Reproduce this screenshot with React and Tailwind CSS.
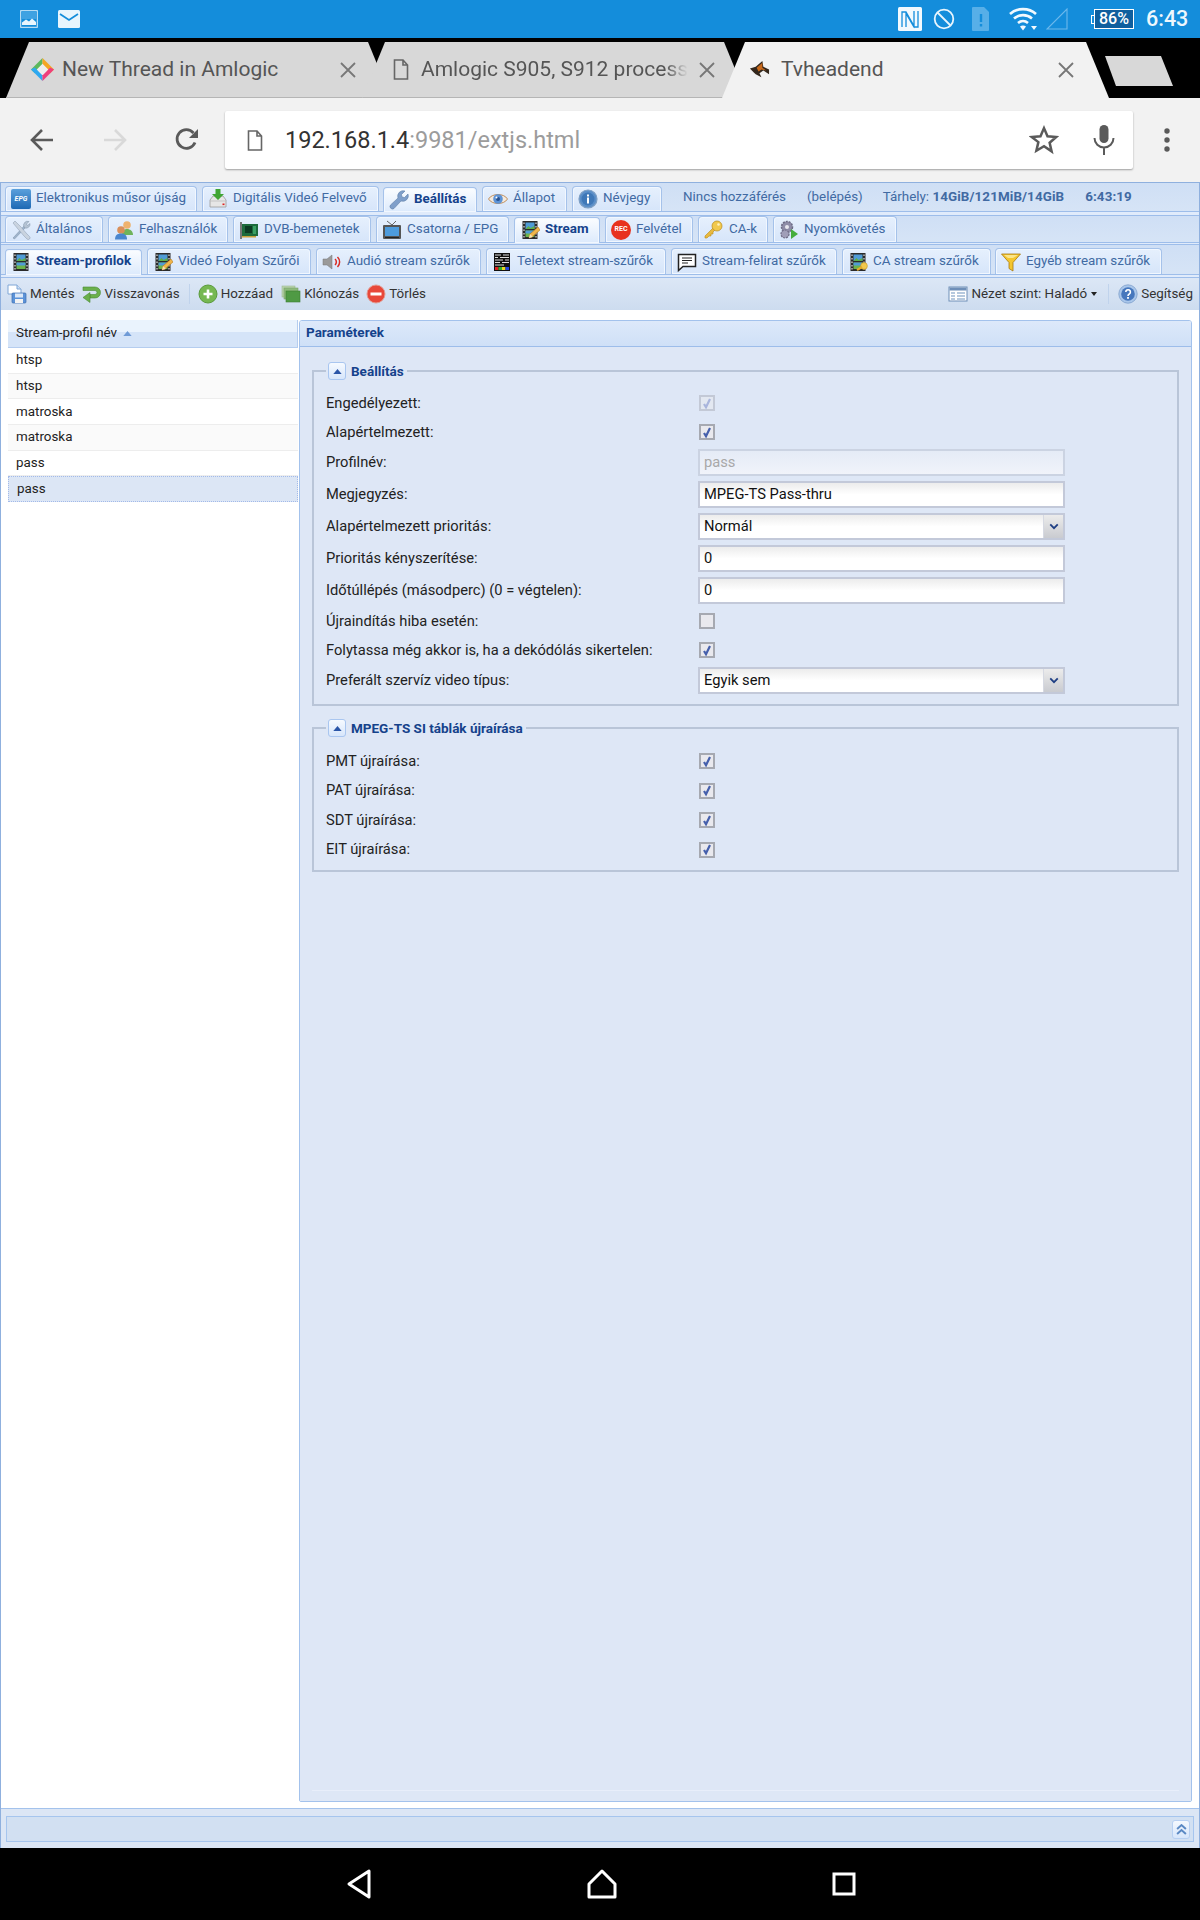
import React from "react";

const I = ({ children, className = "w-5 h-5" }) => (
  <svg viewBox="0 0 20 20" className={`${className} shrink-0`}>{children}</svg>
);

const Film = () => (
  <g>
    <rect x="2.500" y="1" width="15" height="18" fill="#2b2b2b" />
    <rect x="5.500" y="2.500" width="9" height="6.500" fill="#4f9bd6" />
    <path d="M5.500 9l3-3 2 2 4-2v3z" fill="#5fae4a" />
    <rect x="5.500" y="10.500" width="9" height="6.500" fill="#6cb44c" />
    <rect x="5.500" y="10.500" width="9" height="3" fill="#4f9bd6" />
    <path d="M4 2.500v1.500M4 6v1.500M4 9.500v1.500M4 13v1.500M4 16v1.500M16 2.500v1.500M16 6v1.500M16 9.500v1.500M16 13v1.500M16 16v1.500" stroke="#ddd" strokeWidth="1.200" />
  </g>
);
const Pencil = () => (
  <g>
    <path d="M9 18l1-4 8-7 2 3-8 7z" fill="#f0b54a" stroke="#b57a1c" strokeWidth=".6" />
    <path d="M9 18l1-4 3 3z" fill="#f6e0b0" />
  </g>
);
const IconEpg = () => (
  <span className="w-5 h-5 shrink-0 rounded-[2px] bg-gradient-to-b from-[#5aa0dc] to-[#1d69b4] flex items-center justify-center text-[7px] leading-none font-bold italic text-white">EPG</span>
);
const IconDvr = () => (
  <I>
    <path d="M2 11l3-4h10l3 4v7H2z" fill="#e6e6e6" stroke="#999" strokeWidth=".8" />
    <path d="M2 12h16" stroke="#bbb" strokeWidth=".8" />
    <rect x="14.500" y="14.500" width="2" height="1.600" fill="#d22" />
    <path d="M7.500 0h5v5h3.500l-6 6-6-6h3.500z" fill="#3fa535" />
  </I>
);
const IconWrench = () => (
  <I>
    <path d="M19 4l-3.500 3.500-2.500-.5-.5-2.500L16 1A5.500 5.500 0 0 0 9 8L1.500 15a2.500 2.500 0 0 0 3.500 3.500L12 11A5.500 5.500 0 0 0 19 4z" fill="#7f9fca" stroke="#5f7fa8" strokeWidth=".6" />
  </I>
);
const IconEye = () => (
  <I>
    <path d="M0.500 10C4 4 16 4 19.500 10 16 16 4 16 0.500 10z" fill="#f3eadf" stroke="#c08f5c" strokeWidth="1" />
    <circle cx="10" cy="10" r="4.800" fill="#5d93d6" />
    <circle cx="10" cy="10" r="2" fill="#25508f" />
    <circle cx="8.500" cy="8.500" r="1" fill="#fff" />
  </I>
);
const IconInfo = () => (
  <I>
    <circle cx="10" cy="10" r="9" fill="#5b8fc9" stroke="#7e9fc4" strokeWidth="1.200" />
    <circle cx="10" cy="10" r="6.500" fill="#3f78b8" />
    <rect x="9" y="8.500" width="2" height="6" fill="#fff" />
    <rect x="9" y="5.500" width="2" height="2" fill="#fff" />
  </I>
);
const IconTools = () => (
  <I>
    <path d="M2 18L14 5l1.500 1.500L3.500 19z" fill="#9fb4cc" stroke="#7b8ea5" strokeWidth=".5" />
    <path d="M13 7a4 4 0 0 1 5-5.500L15.500 4l1 1.500L19 3.500A4 4 0 0 1 14 8z" fill="#b6c4d4" stroke="#7b8ea5" strokeWidth=".5" />
    <path d="M2 3l2-2 6 6 6 7 2.500 2.500a1.500 1.500 0 0 1-2.500 2.500L13 16 7 9z" fill="#c9d3df" stroke="#8b9bb0" strokeWidth=".5" />
  </I>
);
const IconUsers = () => (
  <I>
    <circle cx="13" cy="5" r="3.800" fill="#eeb26e" />
    <path d="M8 15c0-4 2-6 5-6s6 2 6 6z" fill="#6fb35c" />
    <circle cx="7" cy="10" r="3.800" fill="#d98f5a" />
    <path d="M1 19.500c0-4 2-6 6-6s6 2 6 6z" fill="#4a86cf" />
  </I>
);
const IconCard = () => (
  <I>
    <rect x="1" y="2" width="2" height="17" fill="#777" />
    <rect x="3" y="4" width="16" height="12" fill="#1d6b3c" />
    <rect x="6" y="6" width="7" height="7" fill="#0c3a22" />
    <rect x="14" y="6" width="3" height="8" fill="#3aa063" />
    <rect x="3" y="16" width="14" height="1.500" fill="#c9a13b" />
  </I>
);
const IconTv = () => (
  <I>
    <path d="M5 1l5 4 4-4" stroke="#666" strokeWidth="1" fill="none" />
    <rect x="1" y="5" width="18" height="14" rx="1" fill="#555" />
    <rect x="3" y="7" width="14" height="9" fill="#4d9bdc" />
    <rect x="3" y="17" width="14" height="1" fill="#222" />
  </I>
);
const IconStream = () => (<I><Film /><Pencil /></I>);
const IconFilm = () => (<I><Film /></I>);
const IconRec = () => (
  <span className="w-5 h-5 shrink-0 rounded-full bg-[#e8321e] flex items-center justify-center text-[7px] leading-none font-bold text-white">REC</span>
);
const IconKey = () => (
  <I>
    <path d="M1 16l8-8 2 2-2 2v2h-2v2H5l-2 2H1z" fill="#e8b93e" stroke="#b88a18" strokeWidth=".6" />
    <circle cx="13" cy="6" r="5" fill="#f1c94e" stroke="#b88a18" strokeWidth=".7" />
    <circle cx="14.500" cy="4.500" r="1.300" fill="#fff2bf" />
  </I>
);
const IconGears = () => (
  <I>
    <circle cx="8" cy="7" r="5.500" fill="#8f8da8" stroke="#6d6b85" strokeDasharray="2 1" strokeWidth="1.500" />
    <circle cx="8" cy="7" r="2" fill="#e8e8ef" />
    <circle cx="6" cy="14" r="4" fill="#a09eb8" stroke="#6d6b85" strokeDasharray="2 1" strokeWidth="1.200" />
    <path d="M12 9l7 5-7 5z" fill="#45ad3c" />
  </I>
);
const IconAudio = () => (
  <I>
    <path d="M1 7h4l5-4v14l-5-4H1z" fill="#9a9a9a" stroke="#777" strokeWidth=".5" />
    <path d="M13 7a4 4 0 0 1 0 6M15.500 5a7 7 0 0 1 0 10" stroke="#d92a22" strokeWidth="1.500" fill="none" />
  </I>
);
const IconTeletext = () => (
  <I>
    <rect x="2" y="1" width="16" height="18" fill="#111" />
    <path d="M3 3h6M11 3h6M3 5.500h3M8 5.500h9M3 8h8M13 8h4M3 10.500h5M10 10.500h7M3 13h9" stroke="#ddd" strokeWidth="1" />
    <rect x="3" y="15" width="3.500" height="3" fill="#e02020" />
    <rect x="6.500" y="15" width="3.500" height="3" fill="#2fae2f" />
    <rect x="10" y="15" width="3.500" height="3" fill="#ecd81e" />
    <rect x="13.500" y="15" width="3.500" height="3" fill="#2244dd" />
  </I>
);
const IconSub = () => (
  <I>
    <path d="M1.500 2.500h17v12H6l-4.500 4z" fill="#fff" stroke="#222" strokeWidth="1.500" />
    <path d="M5 6h10M5 8.500h10M5 11h6" stroke="#222" strokeWidth="1.200" />
  </I>
);
const IconFilmKey = () => (
  <I>
    <Film />
    <circle cx="16" cy="14" r="3.400" fill="#f1c94e" stroke="#b88a18" strokeWidth=".5" />
    <path d="M14 15l-5 3" stroke="#e3ab2c" strokeWidth="2.200" />
  </I>
);
const IconFunnel = () => (
  <I>
    <path d="M0.500 2h19L12 10.500V19l-4-2.500v-6z" fill="#f4c62f" stroke="#a87a10" strokeWidth=".8" />
    <path d="M3 3h14l-5 3H7z" fill="#fbe58a" />
  </I>
);
const IconSave = () => (
  <I>
    <path d="M1 1h9l4 4v5H1z" fill="#fff" stroke="#7fa6d6" strokeWidth="1" />
    <path d="M10 1v4h4" fill="#cfe0f5" stroke="#7fa6d6" strokeWidth="1" />
    <rect x="5" y="9" width="14" height="10" rx="1" fill="#5c93d8" stroke="#3c6fb0" strokeWidth=".7" />
    <rect x="8" y="9.500" width="8" height="4" fill="#dbe8f8" />
    <rect x="8" y="15" width="8" height="4" fill="#f2f2f2" />
  </I>
);
const IconUndo = () => (
  <I>
    <path d="M1 3h12a5.500 5.500 0 0 1 0 11H8v-3.500h5a2 2 0 0 0 0-4H1z" fill="#6ab04c" stroke="#4a8a34" strokeWidth=".6" />
    <path d="M8 8.500v10L1 13.500z" fill="#6ab04c" stroke="#4a8a34" strokeWidth=".6" />
  </I>
);
const IconAdd = () => (
  <I>
    <circle cx="10" cy="10" r="9" fill="#76b852" stroke="#5a9a3c" strokeWidth="1" />
    <path d="M10 5.500v9M5.500 10h9" stroke="#fff" strokeWidth="2.600" />
  </I>
);
const IconClone = () => (
  <I>
    <rect x="1" y="2" width="13" height="11" fill="#b9d3ae" stroke="#9dbb92" strokeWidth=".6" />
    <rect x="3" y="4" width="14" height="11" fill="#8fbb7c" stroke="#7ba269" strokeWidth=".6" />
    <rect x="5" y="7" width="14" height="11" fill="#4f9a44" stroke="#3c7d34" strokeWidth=".6" />
  </I>
);
const IconDelete = () => (
  <I>
    <circle cx="10" cy="10" r="9" fill="#e8483a" stroke="#e39a90" strokeWidth="1" />
    <rect x="4.500" y="8.500" width="11" height="3" fill="#fff" />
  </I>
);
const IconView = () => (
  <I>
    <rect x="1" y="3" width="18" height="14" fill="#fff" stroke="#6f8fb8" strokeWidth="1" />
    <rect x="1.500" y="3.500" width="17" height="3" fill="#6f8fb8" />
    <path d="M3 9h4M3 12h4M3 15h4M9 9h8M9 12h8M9 15h8" stroke="#9fb8d4" strokeWidth="1.400" />
  </I>
);
const IconHelp = () => (
  <I>
    <circle cx="10" cy="10" r="9.200" fill="#a9c6ea" stroke="#7fa0cc" strokeWidth=".8" />
    <circle cx="10" cy="10" r="6.800" fill="#4677bd" />
    <path d="M7.800 8a2.300 2.300 0 1 1 3.500 2c-1 .6-1.300 1-1.300 2" stroke="#fff" strokeWidth="1.600" fill="none" />
    <rect x="9.100" y="13" width="1.800" height="1.800" fill="#fff" />
  </I>
);

const Tab = ({ icon, label, active, className = "" }) => (
  <div
    className={`${className} flex items-center gap-[5px] pl-[5px] rounded-t-[4px] border border-[#a5c2ea] border-b-0 shadow-[inset_0_0_0_1px_#f1f7ff] text-[13.4px] leading-none whitespace-nowrap ${
      active
        ? "bg-gradient-to-b from-[#fbfdff] to-[#dceafc] font-bold text-[#15428b] relative z-10 -mb-px pb-px"
        : "bg-gradient-to-b from-[#e6f0fd] to-[#d6e5fa] text-[#416aa3]"
    }`}
  >
    {icon}
    <span className="mb-[2px]">{label}</span>
  </div>
);

const Band = ({ className = "" }) => (
  <div className={`${className} border-t border-[#9dbdea] bg-[#e0ebfb]`} />
);

const Check = ({ checked = true, disabled }) => (
  <span
    className={`ml-px w-4 h-4 flex items-center justify-center border-2 ${
      disabled ? "border-[#c3c9d6] bg-[#e3e8f1]" : "border-[#a6a9b1] bg-[#e9e9ee]"
    }`}
  >
    {checked && (
      <svg viewBox="0 0 12 12" className="w-[13px] h-[13px]">
        <path d="M3 6.500l2 3.200L9 1.500" fill="none" stroke={disabled ? "#a9b5dc" : "#4660ac"} strokeWidth="2.200" />
      </svg>
    )}
  </span>
);

const Input = ({ value, disabled }) => (
  <div
    className={`w-[367px] h-[27px] flex items-center pl-[4px] border-2 text-[14.7px] ${
      disabled
        ? "border-[#cbd3e2] bg-gradient-to-b from-[#e5ebf6] to-[#f0f3fa] text-[#a8a8a8]"
        : "border-[#c3c9d9] bg-gradient-to-b from-[#ececec] via-white to-white text-[#111]"
    }`}
  >
    {value}
  </div>
);

const Select = ({ value }) => (
  <div className="w-[367px] h-[27px] flex items-center border-2 border-[#c3c9d9] bg-gradient-to-b from-[#ececec] via-white to-white text-[14.7px] text-[#111]">
    <span className="pl-[4px] flex-1">{value}</span>
    <span className="w-[20px] h-full flex items-center justify-center bg-gradient-to-b from-[#ececec] to-[#c9cbd0] border-l border-[#d6d9e2]">
      <svg viewBox="0 0 12 8" className="w-[10px] h-[7px]">
        <path d="M1.500 1.500L6 6l4.500-4.500" fill="none" stroke="#1f3f84" strokeWidth="2.200" />
      </svg>
    </span>
  </div>
);

const Row = ({ label, children, h = "h-6" }) => (
  <div className={`${h} flex items-center`}>
    <span className="w-[384px] pl-[12px] text-[14.7px] text-[#222]">{label}</span>
    {children}
  </div>
);

const Legend = ({ children }) => (
  <legend className="ml-[12px] pl-[2px] pr-[3px] flex items-center gap-[5px] h-[18px] text-[13.5px] font-bold text-[#15428b]">
    <span className="w-[18px] h-[18px] rounded-[3px] border border-[#a9c6f0] bg-gradient-to-b from-[#f6faff] to-[#d7e6fb] flex items-center justify-center">
      <svg viewBox="0 0 10 6" className="w-[9px] h-[5px]"><path d="M5 0l5 6H0z" fill="#2a55a8" /></svg>
    </span>
    {children}
  </legend>
);

const ToolItem = ({ icon, label, className = "" }) => (
  <div className={`${className} flex items-center gap-[3px] text-[13.4px] text-[#333] whitespace-nowrap`}>
    {icon}
    <span className="mt-px">{label}</span>
  </div>
);

const Sep = ({ className = "" }) => <div className={`${className} w-px h-[20px] bg-[#c0d3ec]`} />;

const Cross = ({ className = "" }) => (
  <svg viewBox="0 0 16 16" className={`${className} w-4 h-4 shrink-0`}>
    <path d="M1 1l14 14M15 1L1 15" stroke="#777" strokeWidth="1.800" />
  </svg>
);

const Doc = ({ className = "", stroke = "#777", w = "w-4", h = "h-[21px]" }) => (
  <svg viewBox="0 0 16 21" className={`${className} ${w} ${h} shrink-0`}>
    <path d="M1.500 1h8.500l4.500 5v14h-13z M10 1v5h4.500" fill="none" stroke={stroke} strokeWidth="1.600" />
  </svg>
);

export default function App() {
  return (
    <div className="w-[1200px] h-[1920px] flex flex-col overflow-hidden bg-black font-['Roboto',sans-serif]">
      {/* Android status bar */}
      <div className="h-[38px] shrink-0 bg-[#148ddb] flex items-center pl-[20px]">
        <svg viewBox="0 0 18 18" className="w-[18px] h-[18px]">
          <rect x=".7" y=".7" width="16.600" height="16.600" fill="#148ddb" stroke="#dff0fb" strokeWidth="1" />
          <path d="M2 15v-2.500l4-3 3 2 3-3 4 3.500v3z" fill="#e8f5fd" />
          <rect x="2" y="2" width="14" height="7" fill="#bfe2f8" opacity=".25" />
        </svg>
        <svg viewBox="0 0 22 18" className="ml-[20px] w-[22px] h-[18px]">
          <rect width="22" height="18" rx="1.500" fill="#e8f5fd" />
          <path d="M2 4l9 6 9-6" fill="none" stroke="#148ddb" strokeWidth="1.800" />
        </svg>
        <svg viewBox="0 0 24 24" className="ml-[818px] w-[24px] h-[24px]">
          <rect width="24" height="24" rx="1.500" fill="#f2f9fe" />
          <path d="M4 20V5l4 0 8 14V4M20 4v16l-4 0L8 6.500V20" fill="none" stroke="#148ddb" strokeWidth="1.300" />
        </svg>
        <svg viewBox="0 0 22 22" className="ml-[11px] w-[22px] h-[22px]">
          <circle cx="11" cy="11" r="9.300" fill="none" stroke="#e8f5fd" strokeWidth="1.800" />
          <path d="M4.500 4.500l13 13" stroke="#e8f5fd" strokeWidth="1.800" />
        </svg>
        <svg viewBox="0 0 18 24" className="ml-[17px] w-[18px] h-[24px]">
          <path d="M1 0h11l5 5v18a1 1 0 0 1-1 1H1a1 1 0 0 1-1-1V1a1 1 0 0 1 1-1z" fill="#57afe8" />
          <path d="M9 7v8M9 17v2.500" stroke="#148ddb" strokeWidth="2.400" />
        </svg>
        <svg viewBox="0 0 28 24" className="ml-[19px] w-[28px] h-[24px]">
          <path d="M1 7c7-6.500 19-6.500 26 0M5 11.500c5-4.500 13-4.500 18 0M9 16c3-2.500 7-2.500 10 0" fill="none" stroke="#f2f9fe" strokeWidth="2.600" />
          <path d="M11 19.500c1.500-1.300 4.500-1.300 6 0l-3 4z" fill="#f2f9fe" />
          <path d="M22 19h6l-3 4z" fill="#f2f9fe" />
        </svg>
        <svg viewBox="0 0 22 22" className="ml-[9px] w-[22px] h-[22px]">
          <path d="M21 1v20H1z" fill="none" stroke="#6db9ec" strokeWidth="1.100" />
        </svg>
        <div className="ml-[26px] relative w-[40px] h-[20px] border border-white bg-[#0f5f9e] flex items-center justify-center text-[16px] leading-none font-medium text-white">
          <span className="absolute -left-[4px] top-[5px] w-[3px] h-[9px] border border-white border-r-0" />
          86%
        </div>
        <span className="ml-[12px] text-[21.500px] leading-none font-medium text-[#eef7fd]">6:43</span>
      </div>

      {/* Chrome tab strip */}
      <div className="h-[60px] shrink-0 bg-black pt-[4px] pl-[6px] flex">
        <div className="w-[385px] h-[56px] shrink-0 [clip-path:polygon(0_100%,23px_0,calc(100%-23px)_0,100%_100%)] bg-[#d8d8d8] border-b border-[#b5b5b5] flex items-center pl-[25px] text-[21px] text-[#555]">
          <svg viewBox="0 0 24 24" className="w-[23px] h-[23px] shrink-0">
            <path d="M12 0l-12 12 4 4 8-8z" fill="#5cb85c" />
            <path d="M12 0l12 12-4 4-8-8z" fill="#f5a623" />
            <path d="M0 12l12 12 0-6-8-8z" fill="#2ea8f0" />
            <path d="M24 12l-12 12 0-6 8-8z" fill="#ef3f7c" />
            <path d="M12 6l6 6-6 6-6-6z" fill="#eee" />
          </svg>
          <span className="ml-[8px] w-[278px] whitespace-nowrap mt-[1px]">New Thread in Amlogic</span>
          <Cross />
        </div>
        <div className="-ml-[29px] w-[385px] h-[56px] shrink-0 [clip-path:polygon(0_100%,23px_0,calc(100%-23px)_0,100%_100%)] bg-[#d8d8d8] border-b border-[#b5b5b5] flex items-center pl-[31px] text-[21px] text-[#555]">
          <Doc stroke="#666" />
          <span className="ml-[12px] w-[278px] whitespace-nowrap mt-[1px] [mask-image:linear-gradient(to_right,black_88%,transparent_96%)]">Amlogic S905, S912 process</span>
          <Cross />
        </div>
        <div className="-ml-[25px] w-[387px] h-[56px] shrink-0 [clip-path:polygon(0_100%,23px_0,calc(100%-23px)_0,100%_100%)] bg-[#f2f2f2] flex items-center pl-[27px] text-[21px] text-[#555]">
          <svg viewBox="0 0 22 22" className="w-[21px] h-[21px] shrink-0 blur-[0.6px]">
            <path d="M1 9l6-2 7-6 1 6 6 3 0 5-6-4-4 3 2 4-6-3-2-2z" fill="#33271c" />
            <path d="M8 8l6-5 0 5 4 3-5-1-3 2z" fill="#c8691a" />
          </svg>
          <span className="ml-[11px] w-[277px]">Tvheadend</span>
          <Cross />
        </div>
        <div className="ml-[-4px] mt-[14px] w-[68px] h-[30px] shrink-0 [clip-path:polygon(0_0,56px_0,100%_100%,11px_100%)] bg-[#d8d8d8]" />
      </div>

      {/* Chrome toolbar */}
      <div className="h-[84px] shrink-0 bg-[#f2f2f2] flex items-center">
        <svg viewBox="0 0 24 24" className="ml-[30px] w-[24px] h-[24px]">
          <path d="M23 12H2M12 2L2 12l10 10" fill="none" stroke="#5a5a5a" strokeWidth="2.600" />
        </svg>
        <svg viewBox="0 0 24 24" className="ml-[49px] w-[24px] h-[24px]">
          <path d="M1 12h21M12 2l10 10-10 10" fill="none" stroke="#d9d9d9" strokeWidth="2.600" />
        </svg>
        <svg viewBox="0 0 24 24" className="ml-[48px] w-[24px] h-[24px]">
          <path d="M20 14.500A9.300 9.300 0 1 1 18.500 5" fill="none" stroke="#5a5a5a" strokeWidth="2.800" />
          <path d="M14 10h9V1z" fill="#5a5a5a" />
        </svg>
        <div className="ml-[26px] w-[908px] h-[58px] bg-white rounded-[2px] shadow-[0_1px_2px_rgba(0,0,0,0.35)] flex items-center pl-[22px]">
          <Doc w="w-[16px]" h="h-[21px]" stroke="#666" />
          <span className="ml-[22px] mt-[2px] text-[23.500px] text-[#333] whitespace-nowrap">
            192.168.1.4<span className="text-[#9c9c9c]">:9981/extjs.html</span>
          </span>
          <svg viewBox="0 0 24 24" className="ml-auto w-[30px] h-[30px]">
            <path d="M12 2.500l2.800 6.500 7 .6-5.300 4.600 1.600 6.900L12 17l-6.100 3.600 1.600-6.900L2.200 9.600l7-.6z" fill="none" stroke="#5a5a5a" strokeWidth="2" />
          </svg>
          <svg viewBox="0 0 22 30" className="ml-[34px] mr-[18px] w-[22px] h-[30px]">
            <rect x="6.500" y="0" width="9" height="18" rx="4.500" fill="#5a5a5a" />
            <path d="M1.500 13a9.500 9.500 0 0 0 19 0M11 22.500V30" fill="none" stroke="#5a5a5a" strokeWidth="2" />
          </svg>
        </div>
        <svg viewBox="0 0 6 24" className="ml-[31px] w-[6px] h-[24px]">
          <circle cx="3" cy="3" r="2.700" fill="#5a5a5a" />
          <circle cx="3" cy="12" r="2.700" fill="#5a5a5a" />
          <circle cx="3" cy="21" r="2.700" fill="#5a5a5a" />
        </svg>
      </div>

      {/* Tvheadend app */}
      <div className="flex-1 min-h-0 flex flex-col bg-white border border-[#8fb0de] border-b-0">
        {/* Tab row 1 */}
        <div className="h-[28px] shrink-0 flex items-end gap-[5px] pl-[4px] bg-gradient-to-b from-[#cfdff5] to-[#d6e4f6]">
          <Tab className="w-[192px] h-[25px]" icon={<IconEpg />} label="Elektronikus műsor újság" />
          <Tab className="w-[177px] h-[25px]" icon={<IconDvr />} label="Digitális Videó Felvevő" />
          <Tab className="w-[94px] h-[25px] -ml-px" active icon={<IconWrench />} label="Beállítás" />
          <Tab className="w-[85px] h-[25px]" icon={<IconEye />} label="Állapot" />
          <Tab className="w-[90px] h-[25px]" icon={<IconInfo />} label="Névjegy" />
          <div className="self-center mt-[1px] flex items-center text-[13.4px] text-[#416aa3] whitespace-nowrap">
            <span className="ml-[16px]">Nincs hozzáférés</span>
            <span className="ml-[21px]">(belépés)</span>
            <span className="ml-[20px]">Tárhely: <b className="font-bold tracking-[0.1px]">14GiB/121MiB/14GiB</b></span>
            <b className="ml-[21px] font-bold tracking-[0.1px]">6:43:19</b>
          </div>
        </div>
        <Band className="h-[4px] shrink-0" />

        {/* Tab row 2 */}
        <div className="h-[27px] shrink-0 flex items-end gap-[5px] pl-[4px] border-t border-[#9dbdea] bg-gradient-to-b from-[#cfdff5] to-[#d6e4f6]">
          <Tab className="w-[98px] h-[26px]" icon={<IconTools />} label="Általános" />
          <Tab className="w-[120px] h-[26px]" icon={<IconUsers />} label="Felhasználók" />
          <Tab className="w-[138px] h-[26px]" icon={<IconCard />} label="DVB-bemenetek" />
          <Tab className="w-[133px] h-[26px]" icon={<IconTv />} label="Csatorna / EPG" />
          <Tab className="w-[86px] h-[26px]" active icon={<IconStream />} label="Stream" />
          <Tab className="w-[88px] h-[26px]" icon={<IconRec />} label="Felvétel" />
          <Tab className="w-[70px] h-[26px]" icon={<IconKey />} label="CA-k" />
          <Tab className="w-[124px] h-[26px]" icon={<IconGears />} label="Nyomkövetés" />
        </div>
        <Band className="h-[2px] shrink-0" />

        {/* Tab row 3 */}
        <div className="h-[30px] shrink-0 flex items-end gap-[5px] pl-[4px] border-t border-[#9dbdea] bg-gradient-to-b from-[#cfdff5] to-[#d6e4f6]">
          <Tab className="w-[137px] h-[26px]" active icon={<IconFilm />} label="Stream-profilok" />
          <Tab className="w-[164px] h-[26px]" icon={<IconStream />} label="Videó Folyam Szűrői" />
          <Tab className="w-[165px] h-[26px]" icon={<IconAudio />} label="Audió stream szűrők" />
          <Tab className="w-[180px] h-[26px]" icon={<IconTeletext />} label="Teletext stream-szűrők" />
          <Tab className="w-[166px] h-[26px]" icon={<IconSub />} label="Stream-felirat szűrők" />
          <Tab className="w-[149px] h-[26px]" icon={<IconFilmKey />} label="CA stream szűrők" />
          <Tab className="w-[167px] h-[26px] -ml-px" icon={<IconFunnel />} label="Egyéb stream szűrők" />
        </div>
        <Band className="h-[4px] shrink-0 border-b" />

        {/* Toolbar */}
        <div className="h-[32px] shrink-0 flex items-center pl-[6px] pr-[6px] bg-gradient-to-b from-[#dce7f6] to-[#cddcef]">
          <ToolItem icon={<IconSave />} label="Mentés" />
          <ToolItem className="ml-[7px]" icon={<IconUndo />} label="Visszavonás" />
          <Sep className="ml-[9px]" />
          <ToolItem className="ml-[8px]" icon={<IconAdd />} label="Hozzáad" />
          <ToolItem className="ml-[8px]" icon={<IconClone />} label="Klónozás" />
          <ToolItem className="ml-[7px]" icon={<IconDelete />} label="Törlés" />
          <ToolItem className="ml-auto" icon={<IconView />} label="Nézet szint: Haladó" />
          <svg viewBox="0 0 6 4" className="ml-[4px] w-[6px] h-[4px]"><path d="M0 0h6L3 4z" fill="#222" /></svg>
          <Sep className="ml-[11px]" />
          <ToolItem className="ml-[9px]" icon={<IconHelp />} label="Segítség" />
        </div>

        {/* Main */}
        <div className="flex-1 min-h-0 flex bg-white pt-[10px] pb-[6px] pr-[7px]">
          <div className="w-[290px] shrink-0 ml-[7px] text-[13.4px] text-[#222]">
            <div className="h-[28px] flex items-center pl-[8px] border-b border-[#b5cdef] border-r bg-[linear-gradient(#eaf3fd_0,#eaf3fd_45%,#d5e4f8_45%,#d5e4f8_100%)]">
              Stream-profil név
              <svg viewBox="0 0 10 6" className="ml-[6px] w-[9px] h-[5px]"><path d="M5 0l5 6H0z" fill="#6f9ad6" /></svg>
            </div>
            {[
              ["htsp", "bg-white"],
              ["htsp", "bg-[#fafafa]"],
              ["matroska", "bg-white"],
              ["matroska", "bg-[#fafafa]"],
              ["pass", "bg-white"],
            ].map(([t, c], i) => (
              <div key={i} className={`${c} h-[25.7px] flex items-center pl-[8px] border-b border-[#ededed]`}>{t}</div>
            ))}
            <div className="h-[25.7px] flex items-center pl-[8px] bg-[#dce6f5] border border-dotted border-[#a3bae9]">pass</div>
          </div>

          <div className="flex-1 min-w-0 ml-[1px] flex flex-col rounded-t-[3px] rounded-b-[2px] border border-[#a3c2ec] overflow-hidden">
            <div className="h-[26px] shrink-0 flex items-center pl-[6px] pb-[3px] border-b border-[#9dbdea] bg-gradient-to-b from-[#dde9fa] to-[#cfe0f7] text-[13.5px] font-bold text-[#15428b]">
              Paraméterek
            </div>
            <div className="flex-1 min-h-0 flex flex-col bg-[#dee7f6] pt-[15px] pl-[12px] pr-[12px] pb-[12px]">
              <fieldset className="border-2 border-[#b9c5d8] pb-[10px]">
                <Legend>Beállítás</Legend>
                <div className="flex flex-col gap-[5px] mt-[11px]">
                  <Row label="Engedélyezett:"><Check disabled /></Row>
                  <Row label="Alapértelmezett:"><Check /></Row>
                  <Row label="Profilnév:" h="h-[27px]"><Input value="pass" disabled /></Row>
                  <Row label="Megjegyzés:" h="h-[27px]"><Input value="MPEG-TS Pass-thru" /></Row>
                  <Row label="Alapértelmezett prioritás:" h="h-[27px]"><Select value="Normál" /></Row>
                  <Row label="Prioritás kényszerítése:" h="h-[27px]"><Input value="0" /></Row>
                  <Row label="Időtúllépés (másodperc) (0 = végtelen):" h="h-[27px]"><Input value="0" /></Row>
                  <Row label="Újraindítás hiba esetén:"><Check checked={false} /></Row>
                  <Row label="Folytassa még akkor is, ha a dekódólás sikertelen:"><Check /></Row>
                  <Row label="Preferált szervíz video típus:" h="h-[27px]"><Select value="Egyik sem" /></Row>
                </div>
              </fieldset>
              <fieldset className="mt-[13px] border-2 border-[#b9c5d8] pb-[8px]">
                <Legend>MPEG-TS SI táblák újraírása</Legend>
                <div className="flex flex-col gap-[5.5px] mt-[12px]">
                  <Row label="PMT újraírása:"><Check /></Row>
                  <Row label="PAT újraírása:"><Check /></Row>
                  <Row label="SDT újraírása:"><Check /></Row>
                  <Row label="EIT újraírása:"><Check /></Row>
                </div>
              </fieldset>
              <div className="mt-auto mb-[-2px] border-t border-[#e8eefa]" />
            </div>
          </div>
        </div>

        {/* Footer */}
        <div className="h-[40px] shrink-0 bg-[#dce6f5] border-t border-[#a3c2ec] pt-[7px] pl-[5px] pr-[5px]">
          <div className="h-[26px] bg-[#d2e0f2] border border-[#a6c5ee] flex items-center justify-end pr-[3px]">
            <span className="w-[18px] h-[19px] rounded-[3px] border border-[#b8d0f2] bg-gradient-to-b from-[#f4f8fe] to-[#d7e6fb] flex items-center justify-center">
              <svg viewBox="0 0 10 10" className="w-[11px] h-[11px]">
                <path d="M1 4.500L5 1l4 3.500M1 9L5 5.500 9 9" fill="none" stroke="#5b89c4" strokeWidth="1.800" />
              </svg>
            </span>
          </div>
        </div>
      </div>

      {/* Android nav bar */}
      <div className="h-[72px] shrink-0 bg-black flex items-center pl-[347px]">
        <svg viewBox="0 0 24 30" className="w-[24px] h-[30px]">
          <path d="M22 2v26L2 15z" fill="none" stroke="#fff" strokeWidth="3" strokeLinejoin="round" />
        </svg>
        <svg viewBox="0 0 30 30" className="ml-[216px] w-[30px] h-[30px]">
          <path d="M15 2L2 15v13h26V15z" fill="none" stroke="#fff" strokeWidth="3" strokeLinejoin="round" />
        </svg>
        <svg viewBox="0 0 24 24" className="ml-[215px] w-[24px] h-[24px]">
          <rect x="2" y="2" width="20" height="20" fill="none" stroke="#fff" strokeWidth="3" />
        </svg>
      </div>
    </div>
  );
}
